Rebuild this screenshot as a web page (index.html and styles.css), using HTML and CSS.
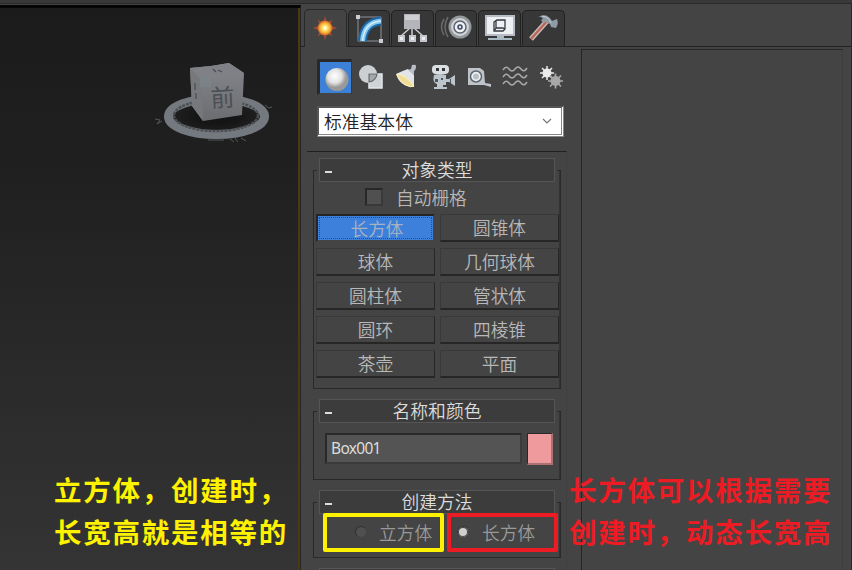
FILE: index.html
```html
<!DOCTYPE html>
<html lang="zh-CN">
<head>
<meta charset="utf-8">
<title>创建面板</title>
<link rel="stylesheet" href="styles.css">
</head>
<body>
<div class="app">
  <header class="topbar"></header>
  <main class="workspace">
    <section class="viewport">
      <svg class="viewcube" width="130" height="95" viewBox="0 0 130 95">
        <defs>
          <linearGradient id="front" x1="0" y1="0" x2="0" y2="1"><stop offset="0" stop-color="#85868b"/><stop offset="1" stop-color="#6c6d71"/></linearGradient>
          <radialGradient id="shade"><stop offset=".4" stop-color="#151515"/><stop offset="1" stop-color="#222"/></radialGradient>
        </defs>
        <ellipse cx="66.500" cy="61.500" rx="48" ry="18" fill="url(#shade)" stroke="#747980" stroke-width="9"/>
        <ellipse cx="66" cy="60.500" rx="42" ry="15.500" fill="none" stroke="#4c5054" stroke-width="2.500" stroke-dasharray="3 1"/>
        <path d="M40 13L61 11 79 8 94 18 92 60 53 66 42 51Z" fill="url(#front)"/>
        <path d="M40 13L61 11 79 8 94 18 51 24Z" fill="#808186"/>
        <path d="M40 13L51 24 53 66 42 51Z" fill="#77787c"/>
        <path d="M50 22h11v10H50z" fill="#7b8288"/>
        <text class="cube-face" x="61" y="52" transform="rotate(-3 61 52)">前</text>
        <path d="M63 14l3 3M68 15l4 2M45 28v7M46 38v6" fill="none" stroke="#484b50" stroke-width="1.200"/>
        <path d="M5 64l5 1-3 4 5-3M115 50l4 3 3-1M80 84l4 3M84 82l4 5M91 83l5 3M58 85h16" fill="none" stroke="#53565a"/>
      </svg>
    </section>
    <aside class="command">
      <nav class="tabs">
        <span class="tab active">
          <svg width="26" height="26" viewBox="0 0 28 28"><defs><radialGradient id="sun"><stop offset=".1" stop-color="#fffbe0"/><stop offset=".35" stop-color="#ffe36a"/><stop offset=".75" stop-color="#f0a030"/><stop offset="1" stop-color="#b9601f"/></radialGradient></defs><path d="M14 1l2 7 6-3-3 6 8 3-8 3 3 6-6-3-2 7-2-7-6 3 3-6-8-3 8-3-3-6 6 3z" fill="#a84a35"/><circle cx="14" cy="14" r="8" fill="url(#sun)"/></svg>
        </span>
        <span class="tab">
          <svg width="30" height="30" viewBox="0 0 30 30"><path d="M4 4h23v24H4z" fill="none" stroke="#90939a"/><path d="M8.500 28C9.500 16 15 9 27 8" fill="none" stroke="#1d65a7" stroke-width="9"/><path d="M8.500 28C9.500 16 15 9 27 8" fill="none" stroke="#83c7ed" stroke-width="5"/><path d="M8.500 28C9.500 16 15 9 27 8" fill="none" stroke="#d3edfa" stroke-width="1.500"/><path d="M2 2h4v4H2zM25 26h4v4h-4z" fill="#c9ccd2"/></svg>
        </span>
        <span class="tab">
          <svg width="30" height="30" viewBox="0 0 30 30"><path d="M15 15v8M13 15l-9 8M17 15l9 8" stroke="#ccc" stroke-width="1.500"/><path d="M7 1h16v15H7z" fill="#b4b5ba"/><path d="M8 2h14v5H8z" fill="#cecfd3"/><path d="M1 22h7v7H1zM12 22h7v7h-7zM23 22h7v7h-7z" fill="#c4c7cd"/><path d="M3 24h3v3H3zM14 24h3v3h-3zM25 24h3v3h-3z" fill="#ecedf0"/></svg>
        </span>
        <span class="tab">
          <svg width="32" height="30" viewBox="0 0 32 30"><circle cx="20" cy="14" r="11.500" fill="#92989b"/><circle cx="20" cy="14" r="9" fill="#d0d4d7"/><circle cx="20" cy="14" r="6" fill="#f0f1f4" stroke="#5c6473" stroke-width="1.500"/><circle cx="20" cy="14" r="2" fill="#dce3ef" stroke="#3c485e" stroke-width="1.500"/><path d="M8 4Q2 14 8 24M4 6Q-1 14 4 22" fill="none" stroke="#6a6a6a" stroke-width="1.500"/></svg>
        </span>
        <span class="tab">
          <svg width="32" height="30" viewBox="0 0 32 30"><path d="M1 2h30v21H1z" fill="#b7bdc4"/><path d="M3 4h26v17H3z" fill="#eef0f3"/><path d="M10 9l3-2h8v9l-2 2h-9zM12 7v8l-2 3M12 15h7l2 1" fill="none" stroke="#343940" stroke-width="1.300"/><path d="M13 23h7v2h8v2H4v-2h9z" fill="#a7bac4"/></svg>
        </span>
        <span class="tab">
          <svg width="30" height="30" viewBox="0 0 30 30"><path d="M3 26L19 8" stroke="#cbbcb8" stroke-width="5"/><path d="M3 26L19 8" stroke="#b96557" stroke-width="2.500"/><path d="M10 4Q19-1 24 8l5-2q2 5-1 9l-5-1-1-3-5-2-2 1-2-3 2-1q-2-3-5-2z" fill="#8f9ba5"/><path d="M14 3q7 1 9 7" fill="none" stroke="#c7d0d7"/></svg>
        </span>
      </nav>
      <div class="command-body">
        <div class="panel">
          <div class="categories">
            <span class="category selected"><svg width="28" height="28" viewBox="0 0 28 28"><defs><radialGradient id="ball" cx=".4" cy=".35"><stop offset="0" stop-color="#fff"/><stop offset=".6" stop-color="#e2e2e2"/><stop offset="1" stop-color="#999"/></radialGradient></defs><circle cx="16" cy="15.500" r="11.500" fill="url(#ball)"/></svg></span>
            <span class="category"><svg width="26" height="26" viewBox="0 0 26 26"><circle cx="10" cy="10" r="9" fill="#cdd0d3"/><path d="M11 10h13v14H11z" fill="#d0d3d6" stroke="#e4e5e7" stroke-width="1.500"/><path d="M11 18V10h8A9 9 0 0 1 11 18z" fill="#a5a8ab" stroke="#666" stroke-width="1.200"/></svg></span>
            <span class="category"><svg width="26" height="26" viewBox="0 0 26 26"><path d="M2 10Q8 7 14 5L20 11 20 23Q6 23 2 10z" fill="#e1e5ea"/><path d="M3 10Q12 11 20 22 17 24 12 21 5 17 3 10z" fill="#efdd94" stroke="#fff2bb"/><path d="M14 6l3-1 1-4q4-1 4 1 0 4-2 5v4z" fill="#b8bfc7"/></svg></span>
            <span class="category"><svg width="26" height="26" viewBox="0 0 26 26"><rect x="2" y="1" width="17" height="9" rx="4" fill="#dcdfe2"/><path d="M6 4h3v3H6zM12 4h3v3h-3z" fill="#34383d"/><path d="M4 11q6-2 12 0v4h3l6-4v11l-6-4h-3v3h-3v2h4v2H4v-2h3v-3q-5-1-3-9z" fill="#bac5cd"/><path d="M5 15h3v3H5zM11 14h2v2h-2zM20 15h1v4h-1z" fill="#4b555e"/></svg></span>
            <span class="category"><svg width="26" height="26" viewBox="0 0 26 26"><path d="M2 4H14l4 3 1 12 6 1v3l-7-2H2z" fill="#bec4c9"/><circle cx="10" cy="12.500" r="5.500" fill="#edf0f2" stroke="#5e656c" stroke-width="1.500"/><circle cx="10" cy="12.500" r="3" fill="#b8c0c6"/></svg></span>
            <span class="category"><svg width="26" height="26" viewBox="0 0 26 26"><path d="M1 6q3-5 6-1t6 0 6 0 6-1M1 13q3-5 6-1t6 0 6 0 6-1M1 20q3-5 6-1t6 0 6 0 6-1" fill="none" stroke="#aaa" stroke-width="1.500"/></svg></span>
            <span class="category"><svg width="26" height="26" viewBox="0 0 26 26"><circle cx="9" cy="9" r="4.500" fill="#ececec"/><path d="M9 2v14M2 9h14M4 4l10 10M14 4L4 14" stroke="#ececec" stroke-width="1.500"/><circle cx="17.500" cy="17" r="5" fill="#a8a8a8"/><path d="M17.500 9.500v15M10 17h15M12 11.500l11 11M23 11.500l-11 11" stroke="#a8a8a8" stroke-width="1.700"/></svg></span>
          </div>
          <div class="select"><span>标准基本体</span><svg width="10" height="6" viewBox="0 0 10 6"><path d="M1 1l4 4 4-4" fill="none" stroke="#777" stroke-width="1.200"/></svg></div>
          <div class="rollups">
            <section class="rollup types">
              <h2 class="rollup-title">对象类型</h2>
              <div class="rollup-body">
                <label class="autogrid"><span class="checkbox"></span>自动栅格</label>
                <div class="object-grid">
                  <span class="object pressed">长方体</span><span class="object">圆锥体</span>
                  <span class="object">球体</span><span class="object">几何球体</span>
                  <span class="object">圆柱体</span><span class="object">管状体</span>
                  <span class="object">圆环</span><span class="object">四棱锥</span>
                  <span class="object">茶壶</span><span class="object">平面</span>
                </div>
              </div>
            </section>
            <section class="rollup naming">
              <h2 class="rollup-title">名称和颜色</h2>
              <div class="rollup-body name-row"><span class="name-field">Box001</span><span class="swatch"></span></div>
            </section>
            <section class="rollup method">
              <h2 class="rollup-title">创建方法</h2>
              <div class="rollup-body method-row">
                <label class="choice cube"><span class="radio"></span>立方体</label>
                <label class="choice box"><span class="radio on"></span>长方体</label>
              </div>
            </section>
            <section class="rollup next"><h2 class="rollup-title"></h2></section>
          </div>
        </div>
        <div class="side"></div>
      </div>
    </aside>
  </main>
  <p class="note note-cube">立方体，创建时，<br>长宽高就是相等的</p>
  <p class="note note-box">长方体可以根据需要<br>创建时，动态长宽高</p>
</div>
</body>
</html>
```

FILE: styles.css
```css
* { box-sizing: border-box; }
body { margin: 0; overflow: hidden; background: #444; font-family: "Noto Sans CJK SC", sans-serif; }
svg { display: block; }
.app { position: relative; width: 852px; height: 570px; overflow: hidden; display: flex; flex-direction: column; }
.topbar { height: 4px; flex: none; background: #393939; border-bottom: 1px solid #292929; }
.workspace { display: flex; flex: 1; min-height: 0; }
.viewport { width: 301px; margin-top: 1px; border-top: 3px solid #050505; border-right: 1px solid #262626; box-shadow: inset -2px 0 #4b3815; background: linear-gradient(#1b1b1b, #202020 30%, #343434); padding: 47px 0 0 150px; }
.cube-face { font-size: 24px; font-weight: 400; fill: #4c4f54; }
.command { width: 551px; display: flex; flex-direction: column; border-right: 1px solid #292929; }
.tabs { display: flex; gap: 1px; height: 43px; flex: none; padding: 6px 0 0 3px; border-bottom: 1px solid #222; }
.tab { width: 42.600px; height: 36px; display: flex; align-items: center; justify-content: center; background: #373737; border: 1px solid #222; border-bottom: 0; border-radius: 5px 5px 0 0; padding-bottom: 1px; }
.tab.active { height: 38px; margin-top: -1px; background: #444; border-color: #292929; padding-bottom: 2px; }
.command-body { flex: 1; display: flex; min-height: 0; }
.panel { width: 266px; flex: none; display: flex; flex-direction: column; padding-top: 12px; }
.categories { display: flex; margin-left: 16px; height: 36px; align-items: center; gap: 1px; }
.category { width: 35px; height: 36px; display: flex; align-items: center; justify-content: center; position: relative; left: 1px; }
.category.selected { left: 0; background: #3d80d8; border: 3px solid #292929; border-right: 1px solid #393939; border-bottom: 2px solid #444; }
.select { display: flex; align-items: center; justify-content: space-between; width: 247px; height: 31px; margin: 11px 0 0 16px; padding: 0 9px 0 5px; background: #fff; border: 2px solid #555; border-bottom: 3px double #888; border-right: 3px double #888; font-size: 17.800px; font-weight: 350; color: #222; line-height: 26px; }
.rollups { margin: 14px 0 0 6px; width: 260px; flex: none; border-top: 1px solid #202020; border-right: 1px solid #404040; padding: 6px 5px 0 6px; }
.rollup { position: relative; height: 231px; margin-bottom: 10px; padding: 12px 0 0; }
.rollup::before { content: ""; position: absolute; inset: 12px 0 0; border: 1px solid #292929; box-shadow: inset -1px 0 #333; }
.rollup-title { position: relative; width: 236px; height: 24px; margin: -12px auto 0; background: #3c3c3c; border: 1px solid #555; box-shadow: -2px 0 #444, 2px 0 #444; color: #ddd; font-size: 17.800px; font-weight: 350; line-height: 21px; text-align: center; }
.rollup-title::before { content: ""; position: absolute; left: 5px; top: 12px; width: 7px; height: 2px; background: #ddd; }
.rollup-body { position: relative; }
.autogrid { display: flex; align-items: center; gap: 13px; height: 32px; padding-left: 52px; color: #b8b8b8; font-size: 17.700px; font-weight: 350; line-height: 28px; padding-bottom: 2px; }
.checkbox { width: 18px; height: 18px; background: #505050; border: 2px solid #282828; border-right-color: #393939; border-bottom-color: #393939; }
.object-grid { display: grid; grid-template-columns: 119px 119px; grid-auto-rows: 28px; gap: 6px 5px; padding-left: 3px; }
.object { display: flex; align-items: center; justify-content: center; border: 1px solid #393939; border-right-color: #262626; border-bottom: 2px solid #262626; color: #b8b8b8; font-size: 17.700px; font-weight: 350; line-height: 1; padding-top: 1px; }
.object.pressed { background: #3c80db; border: 2px solid #252525; border-right-color: #444; border-bottom-color: #444; outline: 1px dotted #2a4e7c; outline-offset: -4px; color: #a9b3c0; padding: 2px 0 0 3px; }
.naming { height: 81px; margin-bottom: 10px; }
.name-row { display: flex; gap: 5px; padding: 10px 0 0 12px; }
.name-field { width: 197px; height: 31px; background: #545454; border: 2px solid #292929; border-right-color: #3b3b3b; border-bottom-color: #3b3b3b; padding-left: 4px; color: #ddd; font: 15.500px/27px "Noto Sans", sans-serif; letter-spacing: -.7px; }
.swatch { width: 26px; height: 32px; background: #ef9b9d; border: 1px solid #292929; border-right: 2px solid #aa7072; border-bottom: 2px solid #aa7072; }
.method { height: 68px; margin-bottom: 10px; }
.method-row { display: flex; gap: 3px; padding-left: 10px; margin-top: -1px; }
.choice { display: flex; align-items: center; height: 39px; border-radius: 2px; color: #999; font-size: 17.700px; font-weight: 350; line-height: 28px; padding-bottom: 1px; }
.cube { width: 121px; border: 4px solid #fff200; padding-left: 28px; gap: 12px; }
.box { width: 111px; border: 4px solid #ed1c24; padding-left: 6px; gap: 13px; }
.radio { width: 12px; height: 12px; border-radius: 50%; background: #505050; border: 1px solid #303030; border-right-color: #444; border-bottom-color: #444; }
.radio.on { background: #d0d0d0; box-shadow: inset 0 0 0 1px #444; }
.next { height: 30px; }
.side { width: 262px; margin: 2px 0 0 14px; border-top: 1px solid #252525; border-left: 1px solid #252525; border-right: 1px solid #3d3d3d; }
.note { position: absolute; margin: 0; font-size: 27.500px; font-weight: 700; letter-spacing: 1.750px; line-height: 42px; white-space: nowrap; }
.note-cube { left: 54px; top: 468px; color: #fff200; }
.note-box { left: 569px; top: 468px; color: #ed1c24; }
```
